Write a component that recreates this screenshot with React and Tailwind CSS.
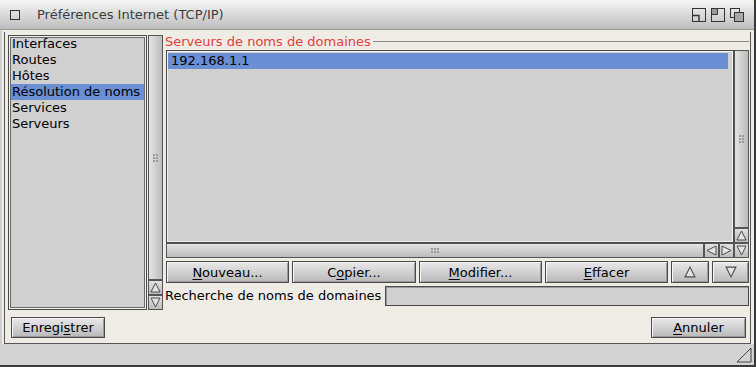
import React from 'react';

const btn =
    'flex items-center justify-center border border-[#4a4a4a] bg-gradient-to-b from-[#e9e9e9] to-[#b9b9b9] shadow-[inset_1px_1px_0_#f6f6f6,inset_-1px_-1px_0_#9a9a9a] text-[13px] text-black';

function Tri({ dir = 'up', size = 11 }) {
    const pts = {
        up: '1,10 5.5,1 10,10',
        down: '1,1 5.5,10 10,1',
        left: '10,1 1,5.5 10,10',
        right: '1,1 10,5.5 1,10',
    }[dir];
    return (
        <svg width={size} height={size} viewBox="0 0 11 11">
            <polygon points={pts} fill="#e4e4e4" stroke="#4a4a4a" strokeWidth="1" />
        </svg>
    );
}

function ArrowBtn({ dir }) {
    return (
        <div className="w-[15px] h-[15px] flex items-center justify-center border border-[#555] bg-gradient-to-b from-[#e2e2e2] to-[#bdbdbd] shrink-0">
            <Tri dir={dir} />
        </div>
    );
}

function Grip({ horizontal }) {
    return (
        <div className={`grid gap-[1px] ${horizontal ? 'grid-cols-3' : 'grid-cols-2'}`}>
            {Array.from({ length: 6 }).map((_, i) => (
                <span key={i} className="w-[2px] h-[2px] bg-[#9a9a9a]" />
            ))}
        </div>
    );
}

function Underline({ text, at }) {
    return (
        <span className="leading-none">
            {text.slice(0, at)}
            <span className="underline underline-offset-2">{text[at]}</span>
            {text.slice(at + 1)}
        </span>
    );
}

function TitleGadgets() {
    return (
        <div className="flex items-center gap-[5px] pr-[10px]">
            <svg width="14" height="14" viewBox="0 0 14 14">
                <rect x="0.5" y="0.5" width="13" height="13" fill="none" stroke="#333" />
                <path d="M0.5 7.5 H7 V13.5" fill="none" stroke="#333" strokeWidth="1.4" />
            </svg>
            <svg width="14" height="14" viewBox="0 0 14 14">
                <rect x="0.5" y="0.5" width="13" height="13" fill="none" stroke="#333" />
                <rect x="1" y="1" width="5" height="5" fill="#9a9a9a" />
                <path d="M6.5 0.5 V6.5 H0.5" fill="none" stroke="#333" />
            </svg>
            <svg width="14" height="14" viewBox="0 0 14 14">
                <rect x="0.5" y="0.5" width="9" height="9" fill="none" stroke="#333" />
                <rect x="4.5" y="4.5" width="9" height="9" fill="#a8a8a8" stroke="#333" />
            </svg>
        </div>
    );
}

const navItems = ['Interfaces', 'Routes', 'Hôtes', 'Résolution de noms', 'Services', 'Serveurs'];

export default function App() {
    return (
        <div className="w-[756px] h-[367px] flex flex-col bg-[#efece6] border-r-[2px] border-b-[2px] border-[#3a3a3a] font-['DejaVu_Sans',sans-serif] text-[13px] leading-[16px] text-black overflow-hidden select-none">
            {/* Title bar */}
            <div className="h-[30px] shrink-0 flex items-center bg-gradient-to-b from-[#f7f7f7] to-[#bdbdbd] border-b border-[#9c9c9c] rounded-tr-[6px]">
                <div className="w-[10px] h-[10px] border border-[#333] ml-[10px]" />
                <span className="ml-[17px] text-[#3c3c3c] text-[13px] leading-none">Préférences Internet (TCP/IP)</span>
                <div className="flex-1" />
                <TitleGadgets />
            </div>

            {/* Body */}
            <div className="h-[314px] shrink-0 flex flex-col pl-[2px] pr-[3px] pt-[2px] border-l-[2px] border-[#cfcfcf]">
                <div className="h-[312px] flex flex-col border border-t-0 border-[#555] pl-[3px] pr-[1px] pt-[3px]">
                    {/* Top area */}
                    <div className="h-[275px] shrink-0 flex">
                        {/* Left list */}
                        <div className="w-[139px] h-full bg-[#d0d0d0] border border-[#4a4a4a] shadow-[inset_0_0_0_1px_#f2f2f2,inset_0_0_0_2px_#6a6a6a] px-[2px]">
                            {navItems.map((it) => (
                                <div
                                    key={it}
                                    className={`h-[16px] leading-[16px] px-[1px] whitespace-nowrap ${it === 'Résolution de noms' ? 'bg-[#6b8fd4]' : ''}`}
                                >
                                    {it}
                                </div>
                            ))}
                        </div>
                        {/* Left scrollbar */}
                        <div className="w-[15px] h-full ml-[1px] flex flex-col">
                            <div className="flex-1 border border-[#555] bg-gradient-to-r from-[#e4e4e4] to-[#bcbcbc] flex items-center justify-center">
                                <Grip />
                            </div>
                            <ArrowBtn dir="up" />
                            <ArrowBtn dir="down" />
                        </div>

                        {/* Right panel */}
                        <div className="flex-1 flex flex-col pl-[3px]">
                            <div className="h-[15px] flex items-start -ml-[1px]">
                                <span className="text-[#e0403a] leading-[13px]">Serveurs de noms de domaines</span>
                                <div className="flex-1 h-px bg-[#8a8a8a] ml-[2px] mt-[6px]" />
                            </div>
                            <div className="h-[208px] flex">
                                <div className="flex-1 flex flex-col">
                                    <div className="flex-1 bg-[#d0d0d0] border border-[#4a4a4a] shadow-[inset_0_0_0_1px_#f2f2f2] pt-[2px] pl-[1px] pr-[5px]">
                                        <div className="h-[16px] leading-[16px] bg-[#6b8fd4] px-[3px]">192.168.1.1</div>
                                    </div>
                                    <div className="h-[15px] flex">
                                        <div className="flex-1 border border-[#555] bg-gradient-to-b from-[#e4e4e4] to-[#bcbcbc] flex items-center justify-center">
                                            <Grip horizontal />
                                        </div>
                                        <ArrowBtn dir="left" />
                                        <ArrowBtn dir="right" />
                                    </div>
                                </div>
                                <div className="w-[15px] flex flex-col">
                                    <div className="flex-1 border border-[#555] bg-gradient-to-r from-[#e4e4e4] to-[#bcbcbc] flex items-center justify-center">
                                        <Grip />
                                    </div>
                                    <ArrowBtn dir="up" />
                                    <ArrowBtn dir="down" />
                                </div>
                            </div>

                            {/* Buttons row */}
                            <div className="h-[22px] mt-[3px] flex gap-[3px]">
                                <div className={`${btn} w-[123px]`}><Underline text="Nouveau..." at={0} /></div>
                                <div className={`${btn} w-[124px]`}><Underline text="Copier..." at={1} /></div>
                                <div className={`${btn} w-[123px]`}><Underline text="Modifier..." at={0} /></div>
                                <div className={`${btn} w-[123px]`}><Underline text="Effacer" at={0} /></div>
                                <div className={`${btn} w-[38px]`}><Tri dir="up" size={12} /></div>
                                <div className={`${btn} flex-1`}><Tri dir="down" size={12} /></div>
                            </div>

                            {/* Search row */}
                            <div className="h-[20px] mt-[3px] flex items-center">
                                <span className="-ml-[1px] whitespace-nowrap">Recherche de noms de domaines</span>
                                <div className="flex-1 h-full ml-[4px] bg-[#d0d0d0] border border-[#4a4a4a] shadow-[inset_1px_1px_0_#9a9a9a]" />
                            </div>
                        </div>
                    </div>

                    {/* Bottom buttons */}
                    <div className="mt-[7px] h-[21px] shrink-0 flex justify-between pl-[3px] pr-[3px]">
                        <div className={`${btn} w-[94px]`}><Underline text="Enregistrer" at={6} /></div>
                        <div className={`${btn} w-[95px]`}><Underline text="Annuler" at={0} /></div>
                    </div>
                </div>
            </div>

            {/* Status bar */}
            <div className="h-[21px] shrink-0 bg-[#d3d3d3] flex items-end justify-end pr-[2px] pb-[2px]">
                <svg width="16" height="16" viewBox="0 0 16 16">
                    <polygon points="15,1 15,15 1,15" fill="none" stroke="#444" />
                </svg>
            </div>
        </div>
    );
}
